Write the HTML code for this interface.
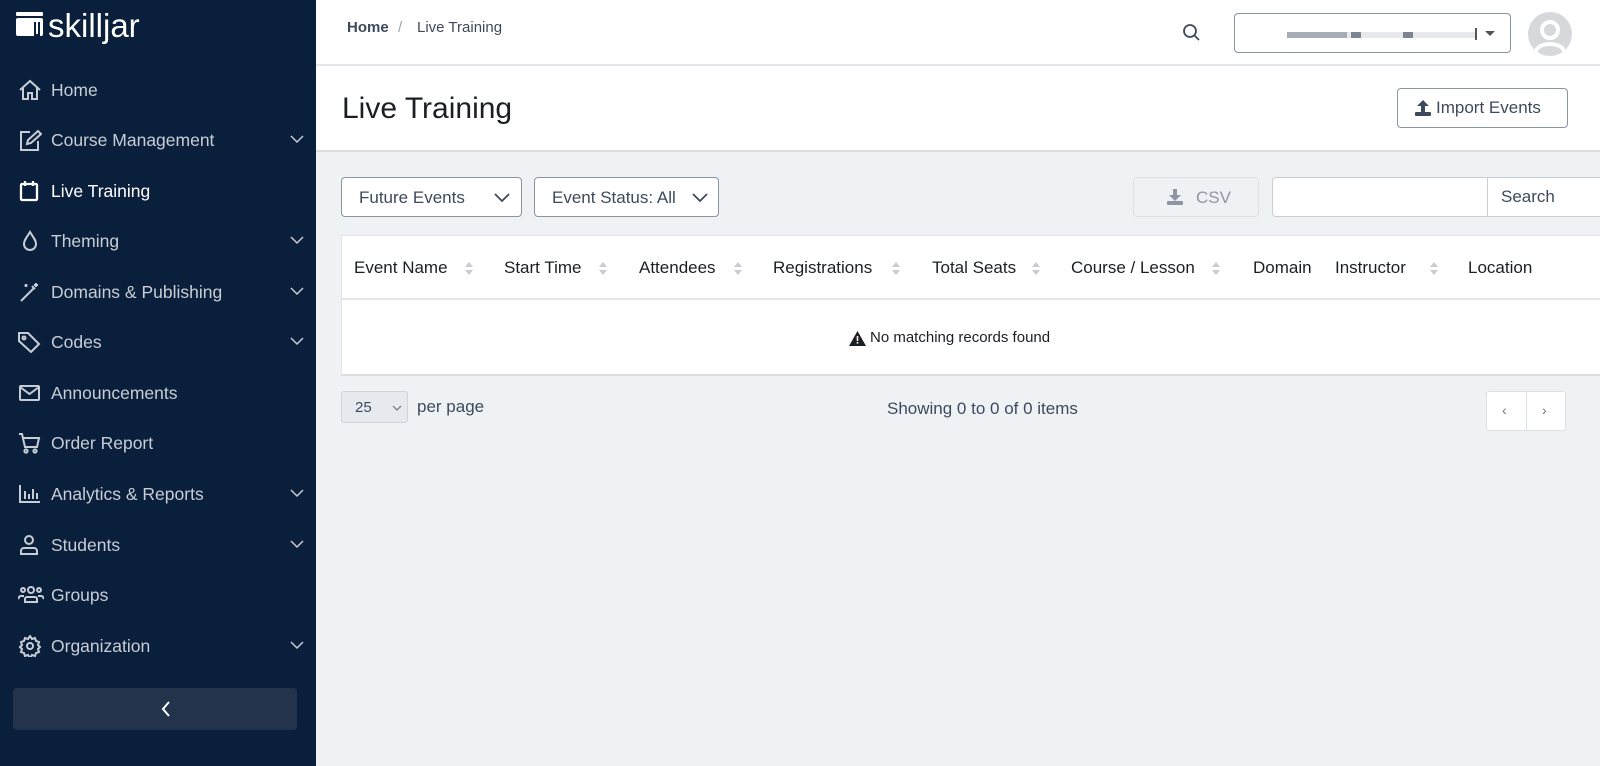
<!DOCTYPE html>
<html><head><meta charset="utf-8"><style>
*{box-sizing:border-box;margin:0;padding:0}
body{width:1600px;height:766px;overflow:hidden;font-family:"Liberation Sans","DejaVu Sans",sans-serif;background:#eff2f5;position:relative}
.abs{position:absolute}
#sb{left:0;top:0;width:316px;height:766px;background:#0a1f3b}
.nav{position:absolute;left:0;width:316px;height:30px;color:#c8cdd5;font-size:17.5px;line-height:30px}
.nav svg{position:absolute;left:18px;top:4px}
.nav span{position:absolute;left:51px}
.nav .ch{position:absolute;left:290px;top:10px}
.w{color:#fff}
.btn{position:absolute;border:1px solid #8a94a3;border-radius:4px;background:#fff;color:#3d4a5c;font-size:17px}
.th{position:absolute;top:258px;font-size:17px;color:#1b1f24}
.sort{position:absolute;top:262px}
</style></head><body>
<div id="sb" class="abs">
 <svg class="abs" style="left:16px;top:12px" width="28" height="24" viewBox="0 0 28 24"><rect x="0" y="0" width="27" height="4" rx="1" fill="#fff"/><rect x="0" y="6" width="27" height="18" rx="2" fill="#fff"/><rect x="18" y="10" width="6" height="14" fill="#0a1f3b"/><rect x="20" y="10" width="2" height="12" fill="#fff"/></svg>
 <div class="abs" style="left:48px;top:6px;color:#fff;font-size:33px;line-height:40px">skilljar</div>
 <div class="nav" style="top:75px"><svg width="24" height="22" viewBox="0 0 24 22" fill="none" stroke="#c8cdd5" stroke-width="2"><path d="M2 11 12 2l10 9M5 9v11h5v-6h4v6h5V9"/></svg><span>Home</span></div>
 <div class="nav" style="top:125px"><svg width="24" height="22" viewBox="0 0 24 22" fill="none" stroke="#c8cdd5" stroke-width="2"><path d="M12 3H3v18h17v-9M9 15l1-4 10-9 3 3-10 9z"/></svg><span>Course Management</span><svg class="ch" width="14" height="9" viewBox="0 0 14 9" fill="none" stroke="#c8cdd5" stroke-width="1.5"><path d="M1 1l6 6 6-6"/></svg></div>
 <div class="nav w" style="top:176px"><svg width="24" height="22" viewBox="0 0 24 22" fill="none" stroke="#fff" stroke-width="2.3"><rect x="3" y="4" width="16" height="16" rx="1"/><path d="M7 1v5M15 1v5"/></svg><span style="color:#fff">Live Training</span></div>
 <div class="nav" style="top:226px"><svg width="24" height="22" viewBox="0 0 24 22" fill="none" stroke="#c8cdd5" stroke-width="2"><path d="M12 2C9 7 6 10 6 14a6 6 0 0012 0c0-4-3-7-6-12z"/></svg><span>Theming</span><svg class="ch" width="14" height="9" viewBox="0 0 14 9" fill="none" stroke="#c8cdd5" stroke-width="1.5"><path d="M1 1l6 6 6-6"/></svg></div>
 <div class="nav" style="top:277px"><svg width="24" height="22" viewBox="0 0 24 22" fill="none" stroke="#c8cdd5" stroke-width="2"><path d="M3 20 16 7M14 5l3 3M18 2v4M20 4h-4M8 3v3M6.5 4.5h3"/></svg><span>Domains &amp; Publishing</span><svg class="ch" width="14" height="9" viewBox="0 0 14 9" fill="none" stroke="#c8cdd5" stroke-width="1.5"><path d="M1 1l6 6 6-6"/></svg></div>
 <div class="nav" style="top:327px"><svg width="24" height="22" viewBox="0 0 24 22" fill="none" stroke="#c8cdd5" stroke-width="2"><path d="M1 2h9l11 11-8 8L1 10z"/><circle cx="6" cy="7" r="1.5"/></svg><span>Codes</span><svg class="ch" width="14" height="9" viewBox="0 0 14 9" fill="none" stroke="#c8cdd5" stroke-width="1.5"><path d="M1 1l6 6 6-6"/></svg></div>
 <div class="nav" style="top:378px"><svg width="24" height="22" viewBox="0 0 24 22" fill="none" stroke="#c8cdd5" stroke-width="2"><rect x="2" y="4" width="19" height="14" rx="1"/><path d="M2 5l9.5 7L21 5"/></svg><span>Announcements</span></div>
 <div class="nav" style="top:428px"><svg width="24" height="22" viewBox="0 0 24 22" fill="none" stroke="#c8cdd5" stroke-width="2"><path d="M1 2h3l3 13h12l2-9H5"/><circle cx="8" cy="19" r="1.6"/><circle cx="17" cy="19" r="1.6"/></svg><span>Order Report</span></div>
 <div class="nav" style="top:479px"><svg width="24" height="22" viewBox="0 0 24 22" fill="none" stroke="#c8cdd5" stroke-width="2"><path d="M2 2v17h20M7 8v8M11 11v5M15 6v10M19 10v6"/></svg><span>Analytics &amp; Reports</span><svg class="ch" width="14" height="9" viewBox="0 0 14 9" fill="none" stroke="#c8cdd5" stroke-width="1.5"><path d="M1 1l6 6 6-6"/></svg></div>
 <div class="nav" style="top:530px"><svg width="24" height="22" viewBox="0 0 24 22" fill="none" stroke="#c8cdd5" stroke-width="2"><circle cx="11" cy="6" r="4"/><path d="M3 20v-3a3 3 0 013-3h10a3 3 0 013 3v3z"/></svg><span>Students</span><svg class="ch" width="14" height="9" viewBox="0 0 14 9" fill="none" stroke="#c8cdd5" stroke-width="1.5"><path d="M1 1l6 6 6-6"/></svg></div>
 <div class="nav" style="top:580px"><svg width="26" height="22" viewBox="0 0 26 22" fill="none" stroke="#c8cdd5" stroke-width="2"><circle cx="13" cy="6" r="3"/><circle cx="5" cy="6" r="2"/><circle cx="21" cy="6" r="2"/><path d="M7 18v-3a2 2 0 012-2h8a2 2 0 012 2v3zM1 15a2 2 0 012-3h3M25 15a2 2 0 00-2-3h-3"/></svg><span>Groups</span></div>
 <div class="nav" style="top:631px"><svg width="24" height="22" viewBox="0 0 24 22" fill="none" stroke="#c8cdd5" stroke-width="2"><circle cx="12" cy="11" r="3"/><path d="M12 1l2 3 3-1 1 3 3 1-1 3 2 2-2 2 1 3-3 1-1 3-3-1-2 3-2-3-3 1-1-3-3-1 1-3-2-2 2-2-1-3 3-1 1-3 3 1z"/></svg><span>Organization</span><svg class="ch" width="14" height="9" viewBox="0 0 14 9" fill="none" stroke="#c8cdd5" stroke-width="1.5"><path d="M1 1l6 6 6-6"/></svg></div>
 <div class="abs" style="left:13px;top:688px;width:284px;height:42px;background:#22334b;border-radius:4px"><svg class="abs" style="left:148px;top:13px" width="10" height="16" viewBox="0 0 10 16" fill="none" stroke="#fff" stroke-width="2"><path d="M8 1 2 8l6 7"/></svg></div>
</div>
<!-- top bar -->
<div class="abs" style="left:316px;top:0;width:1284px;height:66px;background:#fff;border-bottom:2px solid #e3e6ea"></div>
<div class="abs" style="left:347px;top:19px;font-size:15px;color:#3d4a5c;font-weight:bold">Home</div>
<div class="abs" style="left:398px;top:19px;font-size:15px;color:#9aa3ad">/</div>
<div class="abs" style="left:417px;top:19px;font-size:15px;color:#3d4a5c">Live Training</div>
<svg class="abs" style="left:1182px;top:23px" width="20" height="20" viewBox="0 0 20 20" fill="none" stroke="#3d4a5c" stroke-width="1.8"><circle cx="8" cy="8" r="6"/><path d="M12.5 12.5 17 17"/></svg>
<div class="abs" style="left:1234px;top:13px;width:277px;height:40px;border:1px solid #8a94a3;border-radius:4px;background:#fff">
 <div class="abs" style="left:52px;top:18px;width:190px;height:6px;background:#e6e8eb"></div>
 <div class="abs" style="left:52px;top:18px;width:60px;height:6px;background:#a7adb6"></div>
 <div class="abs" style="left:116px;top:18px;width:10px;height:6px;background:#7d8593"></div>
 <div class="abs" style="left:168px;top:18px;width:10px;height:6px;background:#7d8593"></div>
 <div class="abs" style="left:240px;top:14px;width:2px;height:12px;background:#555"></div>
 <div class="abs" style="left:250px;top:17px;width:0;height:0;border-left:5px solid transparent;border-right:5px solid transparent;border-top:5px solid #555"></div>
</div>
<div class="abs" style="left:1528px;top:12px;width:44px;height:44px;border-radius:50%;background:#d6d8db;overflow:hidden"><div class="abs" style="left:12px;top:8px;width:20px;height:20px;border-radius:50%;border:4px solid #fff"></div><div class="abs" style="left:6px;top:30px;width:32px;height:20px;border-radius:50%;border:4px solid #fff"></div></div>
<!-- header -->
<div class="abs" style="left:316px;top:66px;width:1284px;height:86px;background:#fff;border-bottom:2px solid #d9dde2"></div>
<div class="abs" style="left:342px;top:92px;font-size:30px;color:#1b1f24">Live Training</div>
<div class="btn" style="left:1397px;top:88px;width:171px;height:40px">
 <svg class="abs" style="left:16px;top:10px" width="18" height="18" viewBox="0 0 18 18" fill="#3d4a5c"><path d="M9 1 3 7h4v6h4V7h4z"/><rect x="1" y="13" width="16" height="4" rx="1"/></svg>
 <span class="abs" style="left:38px;top:9px">Import Events</span></div>
<!-- filters -->
<div class="btn" style="left:341px;top:177px;width:181px;height:40px"><span class="abs" style="left:17px;top:10px">Future Events</span><svg class="abs" style="left:152px;top:15px" width="16" height="10" viewBox="0 0 16 10" fill="none" stroke="#3d4a5c" stroke-width="1.8"><path d="M1 1l7 7 7-7"/></svg></div>
<div class="btn" style="left:534px;top:177px;width:185px;height:40px"><span class="abs" style="left:17px;top:10px">Event Status: All</span><svg class="abs" style="left:157px;top:15px" width="16" height="10" viewBox="0 0 16 10" fill="none" stroke="#3d4a5c" stroke-width="1.8"><path d="M1 1l7 7 7-7"/></svg></div>
<div class="abs" style="left:1133px;top:177px;width:126px;height:40px;border:1px solid #dde1e6;border-radius:4px;background:#eff2f5;color:#8d96a2;font-size:17px"><svg class="abs" style="left:32px;top:10px" width="18" height="18" viewBox="0 0 18 18" fill="#8d96a2"><path d="M9 13 3 7h4V1h4v6h4z"/><rect x="1" y="13" width="16" height="4" rx="1"/></svg><span class="abs" style="left:62px;top:10px">CSV</span></div>
<div class="abs" style="left:1272px;top:177px;width:330px;height:40px;border:1px solid #c9ced5;border-radius:4px 0 0 4px;background:#fff"></div>
<div class="abs" style="left:1487px;top:177px;width:115px;height:40px;border-left:1px solid #c9ced5;color:#3d4a5c;font-size:17px"><span class="abs" style="left:13px;top:10px">Search</span></div>
<!-- table -->
<div class="abs" style="left:341px;top:235px;width:1270px;height:141px;background:#fff;border:1px solid #e0e3e7;border-bottom:2px solid #d9dde2"></div>
<div class="abs" style="left:342px;top:298px;width:1260px;height:2px;background:#e3e6ea"></div>
<div class="th" style="left:354px">Event Name</div><div class="th" style="left:504px">Start Time</div><div class="th" style="left:639px">Attendees</div><div class="th" style="left:773px">Registrations</div><div class="th" style="left:932px">Total Seats</div><div class="th" style="left:1071px">Course / Lesson</div><div class="th" style="left:1253px">Domain</div><div class="th" style="left:1335px">Instructor</div><div class="th" style="left:1468px">Location</div>
<svg width="0" height="0" style="position:absolute"><defs><g id="s"><path d="M0 5 4 0 8 5z M0 8 4 13 8 8z" fill="#c8ccd1"/></g></defs></svg>
<svg class="sort" style="left:465px" width="9" height="13"><use href="#s"/></svg>
<svg class="sort" style="left:599px" width="9" height="13"><use href="#s"/></svg>
<svg class="sort" style="left:734px" width="9" height="13"><use href="#s"/></svg>
<svg class="sort" style="left:892px" width="9" height="13"><use href="#s"/></svg>
<svg class="sort" style="left:1032px" width="9" height="13"><use href="#s"/></svg>
<svg class="sort" style="left:1212px" width="9" height="13"><use href="#s"/></svg>
<svg class="sort" style="left:1430px" width="9" height="13"><use href="#s"/></svg>
<svg class="abs" style="left:849px;top:331px" width="17" height="15" viewBox="0 0 17 15"><path d="M8.5 0 17 15H0z" fill="#1b1f24"/><rect x="7.7" y="5" width="1.6" height="5" fill="#fff"/><rect x="7.7" y="11" width="1.6" height="1.6" fill="#fff"/></svg>
<div class="abs" style="left:870px;top:329px;font-size:15px;color:#1b1f24">No matching records found</div>
<!-- pagination -->
<div class="abs" style="left:341px;top:391px;width:67px;height:32px;border:1px solid #cfd4da;border-radius:3px;background:#e6e9ed;font-size:15px;color:#3d4a5c"><span class="abs" style="left:13px;top:7px">25</span><svg class="abs" style="left:50px;top:13px" width="10" height="6" viewBox="0 0 10 6" fill="none" stroke="#6b7480" stroke-width="1.2"><path d="M1 1l4 4 4-4"/></svg></div>
<div class="abs" style="left:417px;top:397px;font-size:17px;color:#3d4a5c">per page</div>
<div class="abs" style="left:887px;top:399px;font-size:17px;color:#3d4a5c">Showing 0 to 0 of 0 items</div>
<div class="abs" style="left:1486px;top:391px;width:80px;height:40px;border:1px solid #dde1e6;border-radius:3px;background:#fff"><div class="abs" style="left:39px;top:0;width:1px;height:38px;background:#dde1e6"></div><span class="abs" style="left:15px;top:10px;font-size:14px;color:#6b7480">‹</span><span class="abs" style="left:55px;top:10px;font-size:14px;color:#6b7480">›</span></div>
</body></html>
